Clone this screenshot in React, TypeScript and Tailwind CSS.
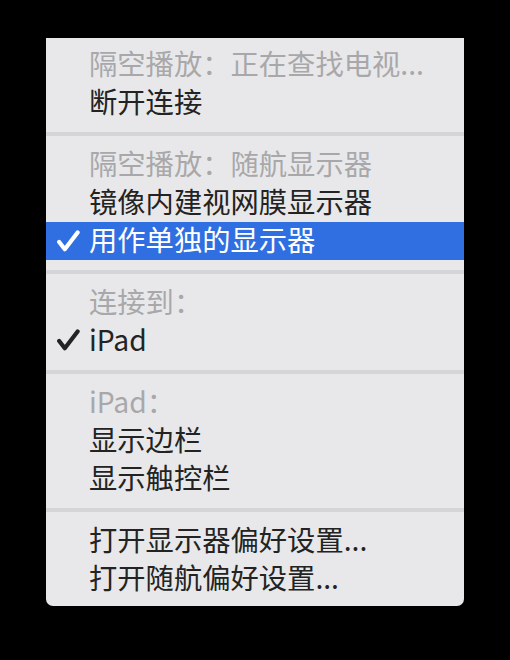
import React from "react";

type Item =
  | { kind: "header"; label: string }
  | { kind: "item"; label: string; checked?: boolean; active?: boolean }
  | { kind: "sep" };

const items: Item[] = [
  { kind: "header", label: "隔空播放：正在查找电视..." },
  { kind: "item", label: "断开连接" },
  { kind: "sep" },
  { kind: "header", label: "隔空播放：随航显示器" },
  { kind: "item", label: "镜像内建视网膜显示器" },
  { kind: "item", label: "用作单独的显示器", checked: true, active: true },
  { kind: "sep" },
  { kind: "header", label: "连接到：" },
  { kind: "item", label: "iPad", checked: true },
  { kind: "sep" },
  { kind: "header", label: "iPad：" },
  { kind: "item", label: "显示边栏" },
  { kind: "item", label: "显示触控栏" },
  { kind: "sep" },
  { kind: "item", label: "打开显示器偏好设置..." },
  { kind: "item", label: "打开随航偏好设置..." },
];

const Check = ({ className }: { className?: string }) => (
  <svg width="24" height="24" viewBox="0 0 24 24" fill="none" className={className}>
    <path
      d="M3.2 13 L8.8 20.2 L21.6 3.4"
      stroke="currentColor"
      strokeWidth="4.2"
      strokeLinecap="round"
      strokeLinejoin="round"
    />
  </svg>
);

function Row({ item }: { item: Item }) {
  if (item.kind === "sep") {
    return (
      <div className="h-[24px] flex items-center">
        <div className="h-[4px] w-full bg-[#d5d5d7]" />
      </div>
    );
  }
  if (item.kind === "header") {
    return (
      <div className="h-[38px] flex items-center pb-[4px] pl-[43px] text-[#a8a8aa] whitespace-nowrap">
        {item.label}
      </div>
    );
  }
  return (
    <div
      className={
        item.active
          ? "h-[38px] flex items-center pb-[3px] bg-[#2f6fe2] text-white whitespace-nowrap"
          : "h-[38px] flex items-center pb-[4px] text-[#232323] whitespace-nowrap"
      }
    >
      <span className="w-[43px] shrink-0 flex items-center pl-[10px] pt-[2px]">
        {item.checked && <Check />}
      </span>
      <span>{item.label}</span>
    </div>
  );
}

export default function App() {
  return (
    <div className="w-[510px] h-[660px] bg-black pt-[38px] pl-[46px] font-['Noto_Sans_CJK_SC','Noto_Sans',sans-serif] text-[28.3px] leading-none">
      <div className="w-[418px] bg-[#e8e8ea] rounded-b-[7px] py-[8px] flex flex-col">
        {items.map((item, i) => (
          <Row key={i} item={item} />
        ))}
      </div>
    </div>
  );
}
